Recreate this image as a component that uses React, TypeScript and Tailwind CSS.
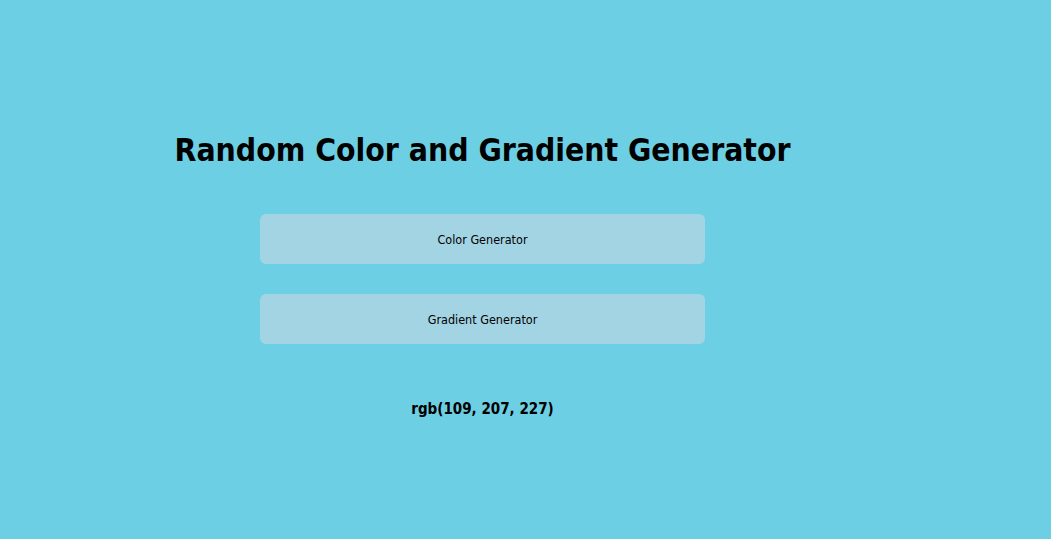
export default function App() {
  return (
    <div className="min-h-screen w-full bg-[#6dcfe3] font-['DejaVu_Sans_Condensed','DejaVu_Sans',Verdana,sans-serif]">
      <div className="w-[965px] flex flex-col items-center pt-[131px]">
        <h1 className="text-[31.6px] font-bold text-black leading-[39px]">Random Color and Gradient Generator</h1>
        <div className="mt-[44px] flex flex-col gap-[30px]">
          <button className="w-[445px] h-[50px] rounded-[6px] bg-[#a3d4e4] text-[12.5px] text-black pt-[2px]">Color Generator</button>
          <button className="w-[445px] h-[50px] rounded-[6px] bg-[#a3d4e4] text-[12.5px] text-black pt-[2px]">Gradient Generator</button>
        </div>
        <p className="mt-[54px] text-[15px] font-bold text-black">rgb(109, 207, 227)</p>
      </div>
    </div>
  );
}
